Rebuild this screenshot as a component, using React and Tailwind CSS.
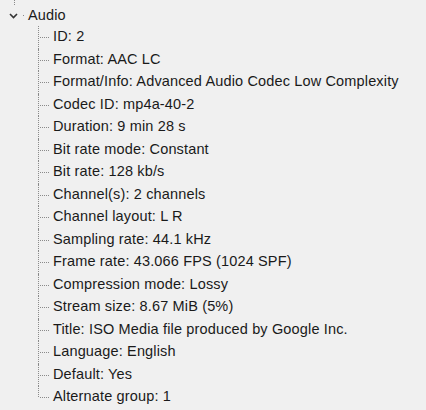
const rows = [
  'ID: 2',
  'Format: AAC LC',
  'Format/Info: Advanced Audio Codec Low Complexity',
  'Codec ID: mp4a-40-2',
  'Duration: 9 min 28 s',
  'Bit rate mode: Constant',
  'Bit rate: 128 kb/s',
  'Channel(s): 2 channels',
  'Channel layout: L R',
  'Sampling rate: 44.1 kHz',
  'Frame rate: 43.066 FPS (1024 SPF)',
  'Compression mode: Lossy',
  'Stream size: 8.67 MiB (5%)',
  'Title: ISO Media file produced by Google Inc.',
  'Language: English',
  'Default: Yes',
  'Alternate group: 1',
];

function Row({ text, last }) {
  return (
    <div className="flex h-[22.5px] items-center">
      <div className="relative w-[11px] self-stretch">
        <div
          className={
            last
              ? 'absolute left-0 top-0 h-1/2 border-l border-dotted border-[#8a8a8a]'
              : 'absolute left-0 top-0 bottom-0 border-l border-dotted border-[#8a8a8a]'
          }
        />
        <div className="absolute left-[2px] top-1/2 w-[9px] border-t border-dotted border-[#8a8a8a]" />
      </div>
      <span className="ml-[4px] whitespace-nowrap">{text}</span>
    </div>
  );
}

export default function App() {
  return (
    <div
      className="w-[426px] h-[410px] overflow-hidden bg-[#f0f0f0] text-[#1a1a1a] text-[14.5px] tracking-[0.15px]"
      style={{ fontFamily: '"Liberation Sans", Arial, sans-serif' }}
    >
      {/* line from the parent node above */}
      <div className="ml-[14px] h-[5px] border-l border-dotted border-[#8a8a8a]" />

      {/* Audio node */}
      <div className="flex h-[21px] items-center">
        <svg className="ml-[9px]" width="9" height="6" viewBox="0 0 9 6">
          <path d="M1 1 L4.5 4.5 L8 1" fill="none" stroke="#333" strokeWidth="1.6" />
        </svg>
        <div className="ml-[5px] w-[1px] h-[1px] bg-[#8a8a8a]" />
        <span className="ml-[4px]">Audio</span>
      </div>

      {/* children */}
      <div className="ml-[38px]">
        {rows.map((r, i) => (
          <Row key={r} text={r} last={i === rows.length - 1} />
        ))}
      </div>
    </div>
  );
}
